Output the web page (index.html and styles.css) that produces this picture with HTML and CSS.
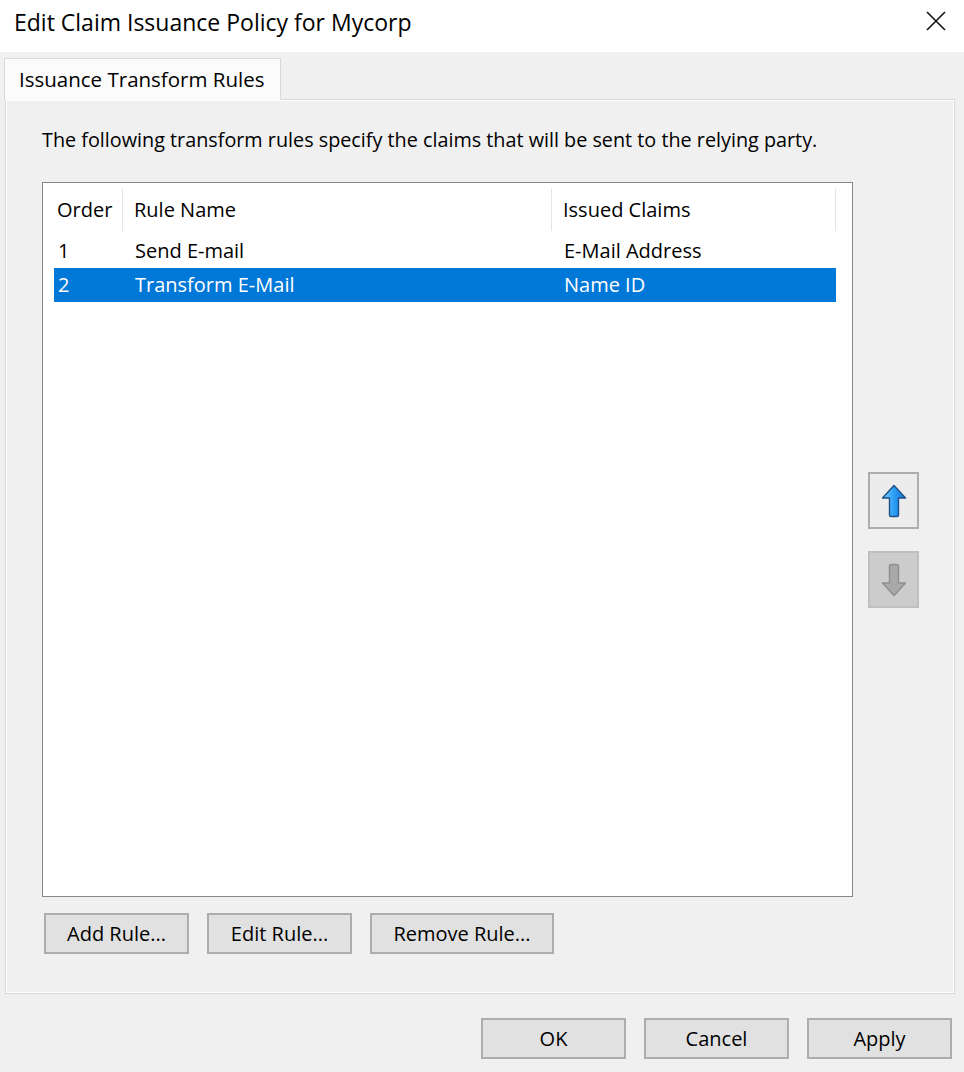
FILE: index.html
```html
<!DOCTYPE html>
<html>
<head>
<meta charset="utf-8">
<link rel="stylesheet" href="styles.css">
</head>
<body>
<div class="dialog">
  <div class="titlebar">
    <span class="title">Edit Claim Issuance Policy for Mycorp</span>
    <span class="close"><svg width="22" height="22" viewBox="0 0 22 22"><path d="M2 2 L20 20 M20 2 L2 20" stroke="#111" stroke-width="1.6" fill="none"/></svg></span>
  </div>
  <div class="tabs">
    <div class="tab">Issuance Transform Rules</div>
  </div>
  <div class="page">
    <p class="desc">The following transform rules specify the claims that will be sent to the relying party.</p>
    <div class="listrow">
      <div class="list">
        <div class="grid head">
          <div class="cell c1">Order</div>
          <div class="cell c2 sep">Rule Name</div>
          <div class="cell c3 sep endsep">Issued Claims</div>
        </div>
        <div class="grid row">
          <div class="cell c1">1</div>
          <div class="cell c2">Send E-mail</div>
          <div class="cell c3">E-Mail Address</div>
        </div>
        <div class="grid row selected">
          <div class="cell c1">2</div>
          <div class="cell c2">Transform E-Mail</div>
          <div class="cell c3">Name ID</div>
        </div>
      </div>
      <div class="arrows">
        <div class="abtn up">
          <svg width="26" height="34" viewBox="0 0 26 34">
            <defs>
              <linearGradient id="gu" x1="0" y1="0" x2="1" y2="0">
                <stop offset="0" stop-color="#7fd0ff"/>
                <stop offset="0.5" stop-color="#2a9df4"/>
                <stop offset="1" stop-color="#1577d6"/>
              </linearGradient>
            </defs>
            <path d="M13 1.5 L24.5 14 L17.5 14 L17.5 31 Q17.5 32.5 16 32.5 L10 32.5 Q8.5 32.5 8.5 31 L8.5 14 L1.5 14 Z" fill="url(#gu)" stroke="#1f4f86" stroke-width="1.4" stroke-linejoin="round"/>
          </svg>
        </div>
        <div class="abtn down">
          <svg width="26" height="34" viewBox="0 0 26 34">
            <path d="M13 32.5 L24.5 20 L17.5 20 L17.5 3 Q17.5 1.5 16 1.5 L10 1.5 Q8.5 1.5 8.5 3 L8.5 20 L1.5 20 Z" fill="#a9a9a9" stroke="#8e8e8e" stroke-width="1.4" stroke-linejoin="round"/>
          </svg>
        </div>
      </div>
    </div>
    <div class="btnrow">
      <button class="btn w145">Add Rule...</button>
      <button class="btn w145">Edit Rule...</button>
      <button class="btn w185">Remove Rule...</button>
    </div>
  </div>
  <div class="footer">
    <button class="btn w145">OK</button>
    <button class="btn w145">Cancel</button>
    <button class="btn w145">Apply</button>
  </div>
</div>
</body>
</html>
```
FILE: styles.css
```css
html, body {
  margin: 0;
  padding: 0;
}
body {
  background: #f0f0f0;
  font-family: "Open Sans", "Noto Sans", "Liberation Sans", sans-serif;
  color: #000;
  width: 964px;
  height: 1072px;
  overflow: hidden;
}
.dialog {
  width: 964px;
  height: 1072px;
  display: flex;
  flex-direction: column;
}
.titlebar {
  height: 52px;
  background: #fff;
  display: flex;
  align-items: center;
  justify-content: space-between;
  padding: 0 17px 0 14px;
  box-sizing: border-box;
}
.title {
  font-size: 23px;
  margin-top: -8px;
}
.close {
  display: flex;
  margin-top: -11px;
}
.tabs {
  display: flex;
  padding-left: 4px;
  margin-top: 6px;
  height: 41px;
  position: relative;
  z-index: 1;
}
.tab {
  width: 277px;
  background: #fbfbfb;
  border: 1px solid #d9d9d9;
  border-bottom: none;
  padding: 0 0 0 14px;
  font-size: 20.5px;
  line-height: 40px;
  height: 42px;
  box-sizing: border-box;
  white-space: nowrap;
}
.page {
  margin: 0 9px 0 5px;
  height: 895px;
  border: 1px solid #d9d9d9;
  box-shadow: inset 1px 1px 0 #fff, inset -1px -1px 0 #fff;
  box-sizing: border-box;
  padding: 27px 0 0 36px;
  display: flex;
  flex-direction: column;
}
.desc {
  margin: 0;
  font-size: 19.8px;
  line-height: 26px;
  white-space: nowrap;
}
.listrow {
  display: flex;
  margin-top: 29px;
}
.list {
  width: 811px;
  height: 715px;
  box-sizing: border-box;
  border: 1px solid #828790;
  background: #fff;
  padding: 0 0 0 11px;
}
.grid {
  display: grid;
  width: 782px;
  grid-template-columns: 68px 429px 285px;
  font-size: 20px;
}
.cell {
  white-space: nowrap;
  overflow: hidden;
}
.head {
  height: 50px;
  align-items: center;
}
.head .cell {
  height: 42px;
  line-height: 42px;
  margin-top: 4px;
}
.head .c1 { padding-left: 3px; }
.head .sep { border-left: 1px solid #e5e5e5; padding-left: 11px; }
.head .endsep { border-right: 1px solid #e5e5e5; }
.row {
  height: 34px;
  line-height: 34px;
}
.head + .row { margin-top: 1px; }
.row .c1 { padding-left: 4px; }
.row .c2, .row .c3 { padding-left: 13px; }
.selected {
  background: #0078d7;
  color: #fff;
}
.arrows {
  display: flex;
  flex-direction: column;
  margin-left: 15px;
  margin-top: 290px;
  gap: 22px;
}
.abtn {
  width: 51px;
  height: 57px;
  box-sizing: border-box;
  display: flex;
  align-items: center;
  justify-content: center;
}
.abtn.up {
  background: #ececec;
  border: 2px solid #adadad;
}
.abtn.down {
  background: #cccccc;
  border: 2px solid #bfbfbf;
}
.btnrow {
  display: flex;
  gap: 18px;
  margin-top: 16px;
  padding-left: 2px;
}
.btn {
  font-family: inherit;
  font-size: 20px;
  color: #000;
  background: #e1e1e1;
  border: 2px solid #adadad;
  height: 41px;
  padding: 0;
  box-sizing: border-box;
  white-space: nowrap;
}
.w145 { width: 145px; }
.w185 { width: 184px; }
.footer {
  display: flex;
  justify-content: flex-end;
  gap: 18px;
  padding-right: 12px;
  margin-top: 24px;
}
```
